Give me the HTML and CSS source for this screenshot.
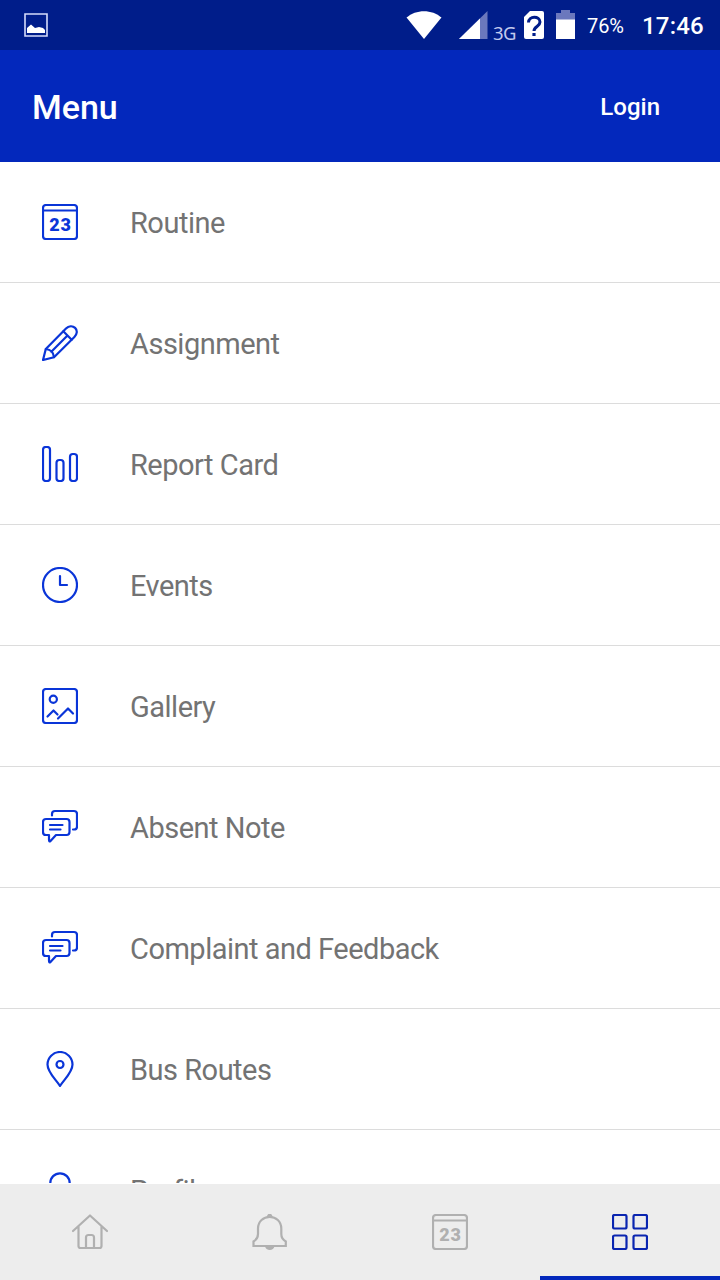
FILE: index.html
```html
<!DOCTYPE html>
<html lang="en">
<head>
<meta charset="utf-8">
<title>Menu</title>
<link rel="stylesheet" href="styles.css">
</head>
<body>
<svg class="defs" width="0" height="0">
  <symbol id="calendar" viewBox="0 0 36 36"><rect x="1" y="1" width="34" height="34" rx="3"/><path d="M1 6.500h34"/><text class="day" x="18.500" y="26.500" text-anchor="middle">23</text></symbol>
  <symbol id="pencil" viewBox="0 0 36 36"><path d="M1 35L3.800 24L24 3.600C26.700 .9 30.500 .4 33.100 2.900S35.100 9.300 32.400 12L12 32.200Z"/><path d="M3.800 24C9 24.500 11.500 27 12 32.200M21.300 6.300L29.700 14.700M9.300 26.700L25.500 10.500"/></symbol>
  <symbol id="bars" viewBox="0 0 36 36"><rect x="1" y="1" width="7" height="34" rx="2.800"/><rect x="14.500" y="14" width="7" height="21" rx="2.800"/><rect x="28" y="8" width="7" height="27" rx="2.800"/></symbol>
  <symbol id="clock" viewBox="0 0 36 36"><circle cx="18" cy="18" r="17"/><path d="M18 9v9h7"/></symbol>
  <symbol id="picture" viewBox="0 0 36 36"><rect x="1" y="1" width="34" height="34" rx="3"/><circle cx="11.300" cy="11.300" r="3.600"/><path d="M5.500 28.500l6-6 4 4M16 30.500L26 20.500l5 5"/></symbol>
  <symbol id="chat" viewBox="0 0 36 36"><path d="M4 10h20.500a3 3 0 0 1 3 3v10a3 3 0 0 1-3 3H14L8.500 32q-1.500 1-1.500-1V26H4a3 3 0 0 1-3-3v-10a3 3 0 0 1 3-3zM8 16h12.500M8 20.500h10.500M10 6.500V5a3 3 0 0 1 3-3h19a3 3 0 0 1 3 3V17.500a3 3 0 0 1-3 3h-1"/></symbol>
  <symbol id="pin" viewBox="0 0 36 36"><path d="M18 35C14 28.500 5.500 21.500 5.500 13.500a12.500 12.500 0 0 1 25 0C30.500 21.500 22 28.500 18 35z"/><circle cx="18" cy="13.500" r="3.500"/></symbol>
  <symbol id="person" viewBox="0 0 36 36"><circle cx="18" cy="11" r="9.700"/><path d="M1 35c2-8 8-12 17-12s15 4 17 12z"/></symbol>
  <symbol id="home" viewBox="0 0 36 36"><path d="M1 17L18 1.500 35 17M6.500 12.500v19.500a2 2 0 0 0 2 2h19a2 2 0 0 0 2-2V12.500M14 34V23.500a2.500 2.500 0 0 1 2.500-2.500h3a2.500 2.500 0 0 1 2.500 2.500V34"/></symbol>
  <symbol id="bell" viewBox="0 0 36 36"><path stroke-linejoin="miter" d="M1.500 32V27.500C5 25.500 6 23 6 20V14.500C6 7.500 11.500 2.800 17.700 2.800S29.300 7.500 29.300 14.500V20c0 3 1 5.500 4.500 7.500V32z"/><path class="solid" d="M15 2.500a2.700 2.700 0 0 1 5.400 0zM13 32h9.500c-.5 5.200-9 5.200-9.500 0z"/></symbol>
  <symbol id="grid" viewBox="0 0 36 36"><rect x="1" y="1" width="13.500" height="13.500" rx="1.500"/><rect x="21.500" y="1" width="13.500" height="13.500" rx="1.500"/><rect x="1" y="21.500" width="13.500" height="13.500" rx="1.500"/><rect x="21.500" y="21.500" width="13.500" height="13.500" rx="1.500"/></symbol>
</svg>
<div class="screen">
  <div class="status">
    <svg class="shot" width="24" height="24"><path d="M1 1h22v22H1z" fill="none" stroke="#d5dcfb" stroke-width="1.600"/><path d="M3 20v-5l4-3.500 4 3.500 4-1 4 1 2 2v3z" fill="#fff"/></svg>
    <svg class="wifi" width="36" height="28"><path d="M.5 6.500C10-2 26-2 35.500 6.500L18 28z" fill="#fff"/></svg>
    <svg class="signal" width="29" height="28"><path d="M28.500 0v28H0z" fill="#6b78bd"/><path d="M21 7.500v20.500H0z" fill="#fff"/></svg>
    <span class="net">3G</span>
    <svg class="sim" width="20" height="28"><path d="M6 0h12a2 2 0 0 1 2 2v24a2 2 0 0 1-2 2H2a2 2 0 0 1-2-2V6z" fill="#fff"/><path d="M4.500 11.500c0-7 11.500-7 11.500-.5 0 4.500-6 4.500-6 9" fill="none" stroke="#001d8a" stroke-width="3"/><path d="M8.400 22h3.200v3H8.400z" fill="#001d8a"/></svg>
    <svg class="battery" width="19" height="29"><path d="M5 0h9v3h5v7H0V3h5z" fill="#6b78bd"/><path d="M0 9.500h19V29H0z" fill="#fff"/></svg>
    <span class="percent">76%</span>
    <span class="time">17:46</span>
  </div>
  <header class="header"><h1 class="title">Menu</h1><span class="login">Login</span></header>
  <main class="list">
    <div class="row"><svg class="icon"><use href="#calendar"/></svg><span class="label">Routine</span></div>
    <div class="row"><svg class="icon"><use href="#pencil"/></svg><span class="label">Assignment</span></div>
    <div class="row"><svg class="icon"><use href="#bars"/></svg><span class="label">Report Card</span></div>
    <div class="row"><svg class="icon"><use href="#clock"/></svg><span class="label">Events</span></div>
    <div class="row"><svg class="icon"><use href="#picture"/></svg><span class="label">Gallery</span></div>
    <div class="row"><svg class="icon"><use href="#chat"/></svg><span class="label">Absent Note</span></div>
    <div class="row"><svg class="icon"><use href="#chat"/></svg><span class="label">Complaint and Feedback</span></div>
    <div class="row"><svg class="icon"><use href="#pin"/></svg><span class="label">Bus Routes</span></div>
    <div class="row"><svg class="icon"><use href="#person"/></svg><span class="label">Profile</span></div>
  </main>
  <nav class="tabs">
    <div class="tab"><svg class="icon"><use href="#home"/></svg></div>
    <div class="tab"><svg class="icon"><use href="#bell"/></svg></div>
    <div class="tab"><svg class="icon"><use href="#calendar"/></svg></div>
    <div class="tab active"><svg class="icon"><use href="#grid"/></svg></div>
  </nav>
</div>
</body>
</html>
```
FILE: styles.css
```css
* { box-sizing: border-box; }
body { margin: 0; font-family: Roboto, sans-serif; background: #fff; }
.defs { position: absolute; }
.screen { width: 720px; height: 1280px; display: flex; flex-direction: column; overflow: hidden; }
.status { height: 50px; flex: none; background: #001d8a; color: #fff; display: flex; align-items: center; padding: 0 16px 0 24px; }
.status svg { flex: none; }
.wifi { margin-left: 358px; }
.signal { margin-left: 17px; }
.net { width: 36px; padding: 16px 0 0 5px; font: 18.5px/20px "Noto Sans", sans-serif; color: #c3caee; letter-spacing: -.5px; }
.battery { margin: 0 0 1px 12px; }
.percent { width: 55px; margin-left: 12px; font-size: 20px; line-height: 24px; padding-top: 2px; letter-spacing: -.1px; }
.time { font-size: 24px; font-weight: 500; line-height: 28px; letter-spacing: .2px; padding-top: 1px; }
.header { height: 112px; flex: none; background: #0328bc; color: #fff; display: flex; align-items: center; justify-content: space-between; padding: 2px 60px 0 32px; }
.title { margin: 0; font-size: 34px; font-weight: 500; }
.login { font-size: 24px; font-weight: 500; }
.list { flex: 1; min-height: 0; overflow: hidden; border-bottom: 1px solid #fff; }
.row { height: 121px; border-bottom: 1px solid #dcdcdc; display: flex; align-items: center; padding-left: 42px; }
.icon { width: 36px; height: 36px; flex: none; fill: none; color: #0a35d8; stroke: currentColor; stroke-width: 2.2; stroke-linecap: round; stroke-linejoin: round; overflow: visible; }
.day { font: 900 18px Roboto, sans-serif; letter-spacing: .8px; fill: currentColor; stroke: none; }
.solid { fill: currentColor; stroke: none; }
.label { margin-left: 52px; padding-top: 2px; font-size: 29px; letter-spacing: -.5px; color: #737373; }
.tabs { height: 96px; flex: none; background: #ededed; display: grid; grid-template-columns: repeat(4, 1fr); }
.tab { display: flex; align-items: center; justify-content: center; border-bottom: 4px solid transparent; padding-top: 4px; }
.tab .icon { color: #b0b0b0; }
.tab.active { border-color: #0328bc; }
.tab.active .icon { color: #0a25b0; }
```
